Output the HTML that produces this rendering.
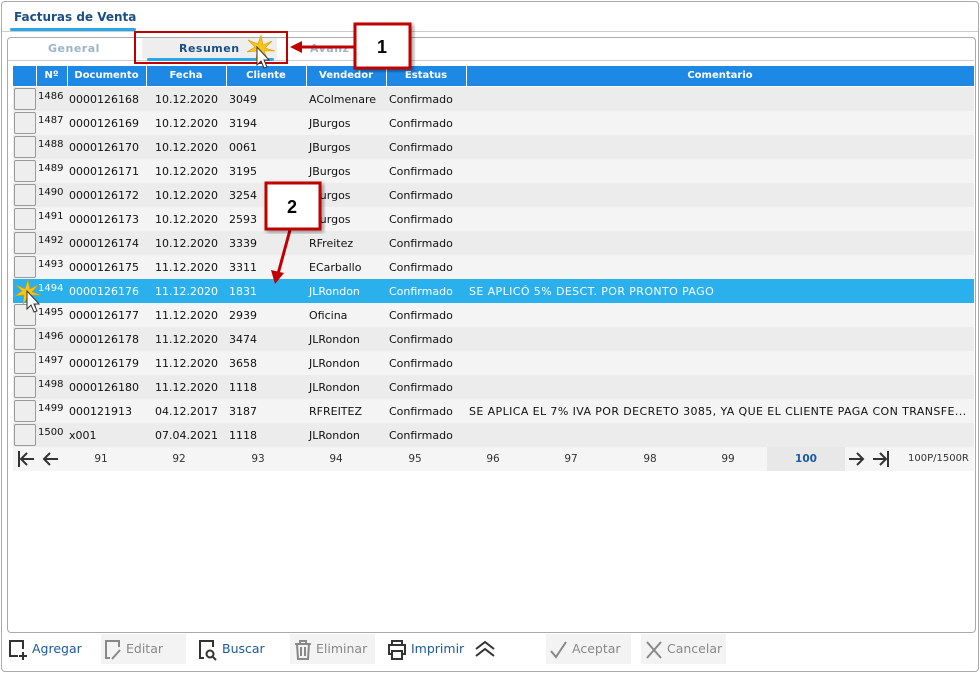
<!DOCTYPE html>
<html><head><meta charset="utf-8"><style>
*{box-sizing:border-box;margin:0;padding:0}
body{width:980px;height:673px;background:#fff;font-family:"DejaVu Sans","Liberation Sans",sans-serif;font-size:11px;color:#111;position:relative;overflow:hidden}
.a{position:absolute}
.row{position:absolute;left:13px;width:961px;height:24px}
.row span{position:absolute;top:6px;white-space:nowrap}
.cb{position:absolute;left:1px;top:1px;width:22px;height:22px;border:1px solid #999;border-radius:2px;background:#eee}
.hd span{position:absolute;top:4px;color:#fff;font-weight:bold;font-size:10px;text-align:center}
.pg span{position:absolute;top:6px;font-size:10.5px;color:#333;width:30px;text-align:center}
.btn{position:absolute;top:634px;height:30px;font-size:12.5px;line-height:30px}
</style></head><body>
<div class="a" style="left:1px;top:1px;width:978px;height:671px;border:1px solid #aaa;border-radius:4px"></div>
<div class="a" style="left:14px;top:10px;font-weight:bold;font-size:12px;color:#1a4f86">Facturas de Venta</div>
<div class="a" style="left:10px;top:28px;width:126px;height:3px;background:#29a6e8;border-radius:2px"></div>
<div class="a" style="left:2px;top:31px;width:976px;height:1px;background:#ccc"></div>
<div class="a" style="left:7px;top:37px;width:969px;height:596px;border:1px solid #aaa;border-radius:4px"></div>
<div class="a" style="left:8px;top:60px;width:966px;height:1px;background:#ccc"></div>
<div class="a" style="left:48px;top:42px;font-weight:bold;color:#9ab4cc;letter-spacing:.5px">General</div>
<div class="a" style="left:142px;top:38px;width:135px;height:21px;background:#eee"></div>
<div class="a" style="left:179px;top:42px;font-weight:bold;color:#1a4f86;letter-spacing:.5px">Resumen</div>
<div class="a" style="left:147px;top:58px;width:127px;height:3px;background:#29a6e8;border-radius:2px"></div>
<div class="a" style="left:310px;top:42px;font-weight:bold;color:#9ab4cc;letter-spacing:.5px">Avanz</div>

<div class="row hd" style="top:66px;height:20px;background:#1e88e5">
<span style="left:23px;width:31px">Nº</span><span style="left:54px;width:79px">Documento</span><span style="left:133px;width:80px">Fecha</span><span style="left:213px;width:80px">Cliente</span><span style="left:293px;width:80px">Vendedor</span><span style="left:373px;width:80px">Estatus</span><span style="left:453px;width:508px">Comentario</span>
</div>
<div class="a" style="left:36px;top:66px;width:1px;height:20px;background:#fff"></div>
<div class="a" style="left:67px;top:66px;width:1px;height:20px;background:#fff"></div>
<div class="a" style="left:146px;top:66px;width:1px;height:20px;background:#fff"></div>
<div class="a" style="left:226px;top:66px;width:1px;height:20px;background:#fff"></div>
<div class="a" style="left:306px;top:66px;width:1px;height:20px;background:#fff"></div>
<div class="a" style="left:386px;top:66px;width:1px;height:20px;background:#fff"></div>
<div class="a" style="left:466px;top:66px;width:1px;height:20px;background:#fff"></div>

<div id="rows"></div>
<script>
var d=[["1486","0000126168","10.12.2020","3049","AColmenare",""],["1487","0000126169","10.12.2020","3194","JBurgos",""],["1488","0000126170","10.12.2020","0061","JBurgos",""],["1489","0000126171","10.12.2020","3195","JBurgos",""],["1490","0000126172","10.12.2020","3254","JBurgos",""],["1491","0000126173","10.12.2020","2593","JBurgos",""],["1492","0000126174","10.12.2020","3339","RFreitez",""],["1493","0000126175","11.12.2020","3311","ECarballo",""],["1494","0000126176","11.12.2020","1831","JLRondon","SE APLICÓ 5% DESCT. POR PRONTO PAGO"],["1495","0000126177","11.12.2020","2939","Oficina",""],["1496","0000126178","11.12.2020","3474","JLRondon",""],["1497","0000126179","11.12.2020","3658","JLRondon",""],["1498","0000126180","11.12.2020","1118","JLRondon",""],["1499","000121913","04.12.2017","3187","RFREITEZ","SE APLICA EL 7% IVA POR DECRETO 3085, YA QUE EL CLIENTE PAGA CON TRANSFE..."],["1500","x001","07.04.2021","1118","JLRondon",""]];
var h="";d.forEach(function(r,i){var sel=i==8;var bg=sel?"#2bb0ee":(i%2?"#f4f4f4":"#ececec");var c=sel?"#fff":"#111";
h+='<div class="row" style="top:'+(87+i*24)+'px;background:'+bg+';color:'+c+'">'+(sel?'':'<div class="cb"></div>')+'<span style="left:25px;top:4px;font-size:10px">'+r[0]+'</span><span style="left:56px">'+r[1]+'</span><span style="left:142px">'+r[2]+'</span><span style="left:216px">'+r[3]+'</span><span style="left:296px">'+r[4]+'</span><span style="left:376px">Confirmado</span><span style="left:456px;letter-spacing:.4px">'+r[5]+'</span></div>';});
document.getElementById("rows").innerHTML=h;
</script>

<div class="row pg" style="top:447px;height:24px;background:#f5f5f5">
<svg class="a" style="left:3px;top:3px" width="44" height="18" viewBox="0 0 44 18" fill="none" stroke="#333" stroke-width="2"><path d="M3 1V17M18 9H5M11 3L5 9L11 15"/><path d="M42 9H28M34 3L28 9L34 15"/></svg>
<span style="left:73px">91</span><span style="left:151px">92</span><span style="left:230px">93</span><span style="left:308px">94</span><span style="left:387px">95</span><span style="left:465px">96</span><span style="left:543px">97</span><span style="left:622px">98</span><span style="left:700px">99</span>
<div class="a" style="left:754px;top:0;width:78px;height:24px;background:#e8e8e8"></div>
<span style="left:778px;font-weight:bold;color:#1a5aa0">100</span>
<svg class="a" style="left:834px;top:3px" width="44" height="18" viewBox="0 0 44 18" fill="none" stroke="#333" stroke-width="2"><path d="M2 9H16M10 3L16 9L10 15"/><path d="M26 9H39M33 3L39 9L33 15M41 1V17"/></svg>
<span style="left:895px;width:auto;font-size:10px">100P/1500R</span>
</div>

<div class="btn" style="left:8px;color:#1a5aa0"><svg class="a" style="left:0;top:5px" width="20" height="22" fill="none" stroke="#333" stroke-width="2"><path d="M10 17H2V2H15V10"/><path d="M15 13V21M11 17H19"/></svg><span style="margin-left:24px">Agregar</span></div>
<div class="btn" style="left:101px;width:85px;background:#f3f3f3;color:#888"><svg class="a" style="left:3px;top:5px" width="20" height="22" fill="none" stroke="#888" stroke-width="2"><path d="M6 19H2V2H15V8"/><path d="M8 20L16 11"/></svg><span style="margin-left:25px">Editar</span></div>
<div class="btn" style="left:198px;color:#1a5aa0"><svg class="a" style="left:0;top:5px" width="20" height="22" fill="none" stroke="#333" stroke-width="2"><path d="M6 19H2V2H15V8"/><circle cx="12" cy="15" r="3.5"/><path d="M15 18L18 21"/></svg><span style="margin-left:24px">Buscar</span></div>
<div class="btn" style="left:290px;width:85px;background:#f3f3f3;color:#888"><svg class="a" style="left:3px;top:5px" width="20" height="22" fill="none" stroke="#888" stroke-width="2"><path d="M2 5H18M7 5V2H13V5M4 5L5 20H15L16 5M8 8V17M12 8V17"/></svg><span style="margin-left:26px">Eliminar</span></div>
<div class="btn" style="left:387px;color:#1a5aa0"><svg class="a" style="left:0;top:5px" width="20" height="22" fill="none" stroke="#333" stroke-width="2"><path d="M5 6V2H15V6M5 15H2V6H18V15H15M5 12H15V20H5Z"/></svg><span style="margin-left:24px">Imprimir</span></div>
<svg class="a" style="left:474px;top:640px" width="22" height="18" fill="none" stroke="#333" stroke-width="2"><path d="M2 9L11 2L20 9M2 16L11 9L20 16"/></svg>
<div class="btn" style="left:546px;width:85px;background:#f3f3f3;color:#888"><svg class="a" style="left:3px;top:6px" width="20" height="20" fill="none" stroke="#888" stroke-width="2"><path d="M2 11L7 17L17 2"/></svg><span style="margin-left:26px">Aceptar</span></div>
<div class="btn" style="left:641px;width:85px;background:#f3f3f3;color:#888"><svg class="a" style="left:3px;top:6px" width="20" height="20" fill="none" stroke="#888" stroke-width="2"><path d="M3 2L17 18M17 2L3 18"/></svg><span style="margin-left:26px">Cancelar</span></div>

<svg class="a" style="left:0;top:0" width="980" height="673">
<defs><filter id="s"><feDropShadow dx="2" dy="2" stdDeviation="2" flood-opacity=".4"/></filter></defs>
<rect x="135" y="32" width="152" height="31" fill="none" stroke="#c00000" stroke-width="2"/>
<path d="M354 47H298" stroke="#c00000" stroke-width="3"/><path d="M290 47L302 41V53Z" fill="#c00000"/>
<rect x="355" y="24" width="55" height="44" fill="#fff" stroke="#c00000" stroke-width="3" filter="url(#s)"/>
<text x="382" y="53" font-family="Liberation Sans" font-weight="bold" font-size="18" text-anchor="middle" fill="#000">1</text>
<path d="M290 230L278 274" stroke="#c00000" stroke-width="3"/><path d="M275 284L271 270L284 273Z" fill="#c00000"/>
<rect x="266" y="183" width="54" height="46" fill="#fff" stroke="#c00000" stroke-width="3" filter="url(#s)"/>
<text x="292" y="213" font-family="Liberation Sans" font-weight="bold" font-size="18" text-anchor="middle" fill="#000">2</text>
<g fill="#f5c518" stroke="#d89a00" stroke-width=".6">
<path d="M261 35L263 45L272 41L265 48L275 51L264 51L268 60L261 53L256 61L257 51L247 52L255 47L248 40L258 44Z"/>
<path d="M28 280L30 289L38 285L32 292L41 295L31 295L34 303L28 297L23 304L24 295L15 296L22 291L16 285L25 289Z"/>
</g>
<path d="M257 47V65L261 61L264 68L267 67L264 60L269 60Z" fill="#fff" stroke="#333"/>
<path d="M27 291V309L31 305L34 312L37 311L34 304L39 304Z" fill="#fff" stroke="#333"/>
</svg>
</body></html>
